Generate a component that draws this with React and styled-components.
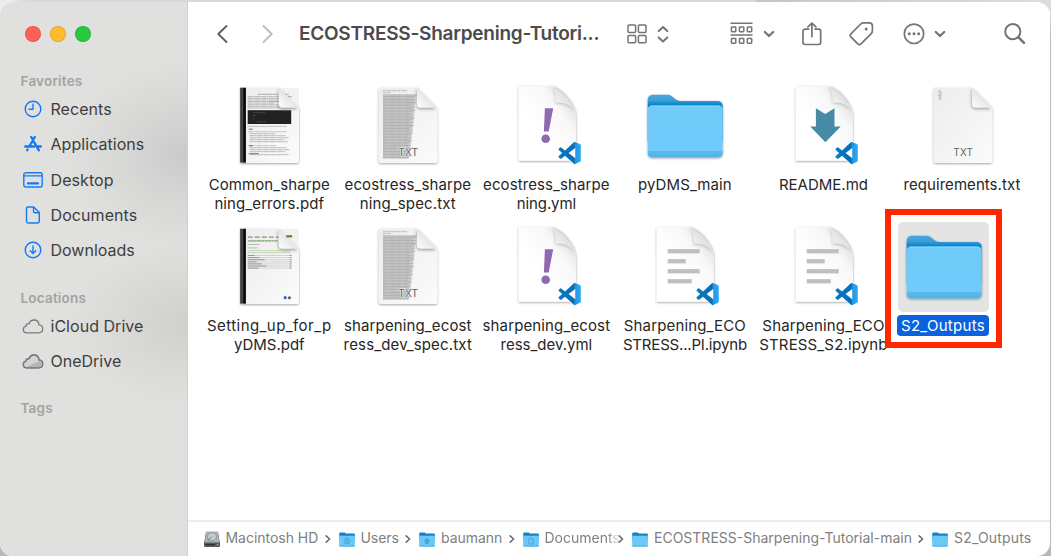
import React from "react";
import styled, { createGlobalStyle } from "styled-components";

const GlobalStyle = createGlobalStyle`
  * { box-sizing: border-box; }
  body {
    margin: 0;
    background: #d6d6d6;
    font-family: Inter, "Liberation Sans", sans-serif;
    overflow: hidden;
  }
  svg { display: block; flex: none; }
`;

const Desktop = styled.div`
  width: 1051px;
  height: 556px;
  padding: 2px 1px 0 0;
  background: linear-gradient(180deg, transparent 0 12px, #b9b9b9 40px),
    linear-gradient(90deg, #ececec 0 10px, #d8d8d8 30px 756px, #c6c6c6 757px, #dcdcdc 1040px);
`;

const Window = styled.div`
  display: flex;
  width: 1050px;
  height: 554px;
  border-radius: 13px;
  overflow: hidden;
  background: #fff;
`;

const Sidebar = styled.aside`
  width: 188px;
  flex: none;
  padding: 24px 0 0 20.5px;
  border-right: 1px solid #d0d0ce;
  background:
    radial-gradient(ellipse 125px 96px at 188px 152px, rgba(182, 183, 185, 0.55), rgba(196, 196, 196, 0.32) 50%, transparent),
    radial-gradient(ellipse 125px 84px at 188px 322px, rgba(192, 191, 184, 0.5), rgba(200, 199, 194, 0.3) 50%, transparent),
    #e0e0de;
`;

const Lights = styled.div`
  display: flex;
  gap: 9.3px;
  padding-left: 4px;
  height: 46px;
`;

const Light = styled.span`
  width: 16px;
  height: 16px;
  border-radius: 50%;
  background: ${(p) => p.$color};
  border: 1px solid rgba(0, 0, 0, 0.1);
`;

const Section = styled.section`
  height: ${(p) => p.$height}px;
`;

const SectionTitle = styled.h2`
  margin: 0;
  height: 20px;
  line-height: 18px;
  font-size: 13.5px;
  font-weight: 600;
  letter-spacing: 0.2px;
  color: #a3a3a1;
`;

const SideRow = styled.div`
  display: flex;
  align-items: center;
  height: 35.3px;
  margin-top: ${(p) => (p.$first ? "-0.6px" : "0")};
`;

const SideIcon = styled.span`
  width: 30px;
  display: flex;
  justify-content: center;
  padding-right: 6px;
`;

const SideLabel = styled.span`
  font-size: 16px;
  letter-spacing: ${(p) => p.$track || 0}px;
  color: #3e3e3d;
`;

const Main = styled.main`
  flex: 1;
  min-width: 0;
  display: flex;
  flex-direction: column;
`;

const Toolbar = styled.header`
  display: flex;
  align-items: center;
  height: 63px;
  padding-left: 27.6px;
  flex: none;
`;

const ToolSlot = styled.span`
  width: ${(p) => p.$width}px;
  display: flex;
  align-items: center;
  flex: none;
`;

const Title = styled.h1`
  margin: 0;
  width: 328.5px;
  font-size: 19px;
  font-weight: 600;
  letter-spacing: -0.24px;
  color: #4b4b4b;
  white-space: nowrap;
`;

const Files = styled.div`
  flex: 1;
  display: grid;
  grid-template-columns: repeat(6, 138.55px);
  grid-auto-rows: 141.3px;
  padding: 16px 0 0 12px;
`;

const File = styled.div`
  display: flex;
  flex-direction: column;
  align-items: center;
  ${(p) => p.$selected && "position: relative; margin: 0 19px 0 -19px;"}
`;

const Art = styled.div`
  width: 91px;
  height: 90px;
  border-radius: 5px;
  background: ${(p) => (p.$selected ? "#e4e4e4" : "transparent")};
`;

const Name = styled.div`
  margin-top: 2.6px;
  padding: 1px 4px;
  border-radius: 4px;
  text-align: center;
  white-space: nowrap;
  font-size: 15px;
  line-height: 19.6px;
  color: ${(p) => (p.$selected ? "#fff" : "#262626")};
  background: ${(p) => (p.$selected ? "#0a62de" : "transparent")};
`;

const Line = styled.div`
  letter-spacing: ${(p) => p.$track || 0}px;
`;

const Highlight = styled.div`
  position: absolute;
  left: 11px;
  top: -13.5px;
  width: 117.6px;
  height: 138.8px;
  border: 6.5px solid #ff2600;
`;

const PathBar = styled.footer`
  display: flex;
  align-items: center;
  height: 36px;
  padding-left: 15.5px;
  border-top: 2px solid #ececec;
`;

const Crumb = styled.div`
  display: flex;
  align-items: center;
  gap: 6px;
  width: ${(p) => p.$width}px;
  flex: none;
`;

const CrumbName = styled.span`
  flex: 1;
  min-width: 0;
  overflow: hidden;
  white-space: nowrap;
  font-size: 14px;
  line-height: 20px;
  margin-top: -1.6px;
  color: #808080;
  letter-spacing: ${(p) => p.$track || 0}px;
  ${(p) => p.$fade && "margin-right: -6px; mask-image: linear-gradient(90deg, #000 78%, transparent 97%);"}
`;

const CrumbEnd = styled.span`
  width: 14px;
  margin-left: -6px;
  display: flex;
`;

const BLUE = "#1479f5";
const TOOL = "#747474";

function SideGlyph({ kind }) {
  const line = { fill: "none", stroke: BLUE, strokeWidth: 1.4, strokeLinecap: "round", strokeLinejoin: "round" };
  const gray = { fill: "none", stroke: "#7b7b7a", strokeWidth: 1.3, strokeLinejoin: "round" };
  const cloud = "M5 14.8C2.7 14.8 1.3 13.2 1.3 11.4C1.3 9.5 2.6 8.3 4.1 8.1C3.9 6.4 5.4 5.3 7 5.8C7.8 3.3 9.8 2 12 2C14.9 2 16.8 4.2 17 6.9C19.2 7.1 20.7 8.8 20.7 10.8C20.7 13.2 19 14.8 16.7 14.8Z";
  switch (kind) {
    case "recents":
      return <svg width="18" height="18"><circle cx="9" cy="9" r="7.8" {...line} /><path d="M9 4V9.2H5" {...line} /></svg>;
    case "apps":
      return (
        <svg width="18" height="18">
          <g {...line} strokeWidth="2.3">
            <path d="M7.2 2L14.9 15.3M10.8 2L5.3 11.5M1.2 11.5H10.2M13.7 11.5H16.8M3.2 15.2L3.6 14.5" />
          </g>
        </svg>
      );
    case "desktop":
      return (
        <svg width="20" height="16">
          <rect x=".8" y=".8" width="18.4" height="14.2" rx="2" {...line} />
          <path d="M1 3.8H19" stroke={BLUE} strokeWidth="1.2" />
          <rect x="4" y="10.2" width="12" height="2.4" rx=".8" fill={BLUE} />
        </svg>
      );
    case "documents":
      return <svg width="16" height="18"><path d="M3 1H8.7L14.3 6.6V15C14.3 16.3 13.6 17 12.3 17H3.5C2.2 17 1.5 16.3 1.5 15V2.8C1.5 1.7 2 1 3 1ZM8.5 1.3V5.3C8.5 6.3 9 6.8 10 6.8H14" {...line} /></svg>;
    case "downloads":
      return <svg width="18" height="18"><circle cx="9" cy="9" r="7.8" {...line} /><path d="M9 5V12.3M6.2 9.8L9 12.6L11.8 9.8" {...line} /></svg>;
    case "icloud":
      return <svg width="22" height="16"><path d={cloud} {...gray} /></svg>;
    default:
      return (
        <svg width="22" height="16">
          <path d={cloud} {...gray} fill="#d4d4d3" />
          <path d="M4 14.4L17 8L20 9.5V12.5L17 14.4Z" fill="#b5b5b4" />
          <path d={cloud} {...gray} />
        </svg>
      );
  }
}

function Chevron({ dir, color }) {
  return (
    <svg width="12" height="20" fill="none" stroke={color} strokeWidth="1.9" strokeLinecap="round" strokeLinejoin="round">
      <path d={dir === "left" ? "M10.5 2L2.3 10L10.5 18" : "M1.5 2L9.7 10L1.5 18"} />
    </svg>
  );
}

function ToolGlyph({ kind }) {
  const s = { fill: "none", stroke: TOOL, strokeWidth: 1.7, strokeLinecap: "round", strokeLinejoin: "round" };
  switch (kind) {
    case "grid":
      return (
        <svg width="20" height="20" {...s} strokeWidth="1.5">
          {[[1, 1], [11.4, 1], [1, 11.4], [11.4, 11.4]].map(([x, y]) => (
            <rect key={x + "-" + y} x={x} y={y} width="7.6" height="7.4" rx="1" />
          ))}
        </svg>
      );
    case "updown":
      return <svg width="12" height="18" {...s} strokeWidth="2"><path d="M1.7 6L6 2L10.3 6M1.7 12.4L6 16.4L10.3 12.4" /></svg>;
    case "group":
      return (
        <svg width="23" height="23" {...s} strokeWidth="1.5">
          <path d="M1 1.2H22M1 12.9H22" />
          {[1.4, 9.4, 17.3].map((x) => (
            <g key={x}>
              <rect x={x} y="5.1" width="4.4" height="4.6" rx=".6" />
              <rect x={x} y="16.6" width="4.4" height="4.6" rx=".6" />
            </g>
          ))}
        </svg>
      );
    case "down":
      return <svg width="12" height="8" {...s} strokeWidth="2.2"><path d="M1.8 2L6 6L10.2 2" /></svg>;
    case "share":
      return <svg width="20" height="24" {...s}><path d="M6.6 7.2H3.3C1.7 7.2 1 8 1 9.4V20.3C1 21.7 1.8 22.5 3.3 22.5H16.4C17.9 22.5 18.7 21.7 18.7 20.3V9.4C18.7 8 17.9 7.2 16.4 7.2H13.1M9.9 14.7V1.1M5.9 4.9L9.9 1L13.9 4.9" /></svg>;
    case "tag":
      return (
        <svg width="25" height="25" {...s}>
          <path d="M14.5 1.8H20.2C22.5 1.8 23.4 2.9 23.4 4.9V9.7C23.4 11.2 22.9 12 22 12.9L12 22.8C11 23.8 9.8 23.8 8.8 22.8L1.9 15.9C.9 14.9.9 13.8 1.9 12.8L11.8 3C12.6 2.2 13.3 1.8 14.5 1.8Z" />
          <circle cx="17.2" cy="8" r="1.5" fill={TOOL} stroke="none" />
        </svg>
      );
    case "more":
      return (
        <svg width="22" height="22" {...s}>
          <circle cx="11" cy="10.8" r="9.7" />
          <g fill={TOOL} stroke="none"><circle cx="6.3" cy="10.8" r="1.5" /><circle cx="11" cy="10.8" r="1.5" /><circle cx="15.7" cy="10.8" r="1.5" /></g>
        </svg>
      );
    default:
      return <svg width="22" height="22" {...s} strokeWidth="2"><circle cx="8.8" cy="8.6" r="7.6" /><path d="M14.6 14.4L20 19.9" strokeWidth="2.5" /></svg>;
  }
}

function Defs() {
  return (
    <svg width="0" height="0" style={{ position: "absolute" }}>
      <defs>
        <linearGradient id="paper" x1="0" y1="0" x2="1" y2="1"><stop offset="0" stopColor="#ececec" /><stop offset="1" stopColor="#fbfbfb" /></linearGradient>
        <linearGradient id="sheet" x1="1" y1="0" x2=".35" y2=".6"><stop offset=".1" stopColor="#dadada" /><stop offset=".5" stopColor="#f8f8f8" /><stop offset="1" stopColor="#fff" /></linearGradient>
        <linearGradient id="fold" x1="0" y1="1" x2=".7" y2=".3"><stop offset="0" stopColor="#fff" /><stop offset="1" stopColor="#dcdcdc" /></linearGradient>
        <linearGradient id="spine"><stop offset="0" stopColor="#111" /><stop offset=".35" stopColor="#555" /><stop offset=".6" stopColor="#111" /><stop offset="1" stopColor="#000" /></linearGradient>
        <linearGradient id="front" x1="0" y1="0" x2="0" y2="1"><stop offset="0" stopColor="#70cbf9" /><stop offset=".87" stopColor="#70cafb" /><stop offset=".87" stopColor="#5cbcec" /><stop offset="1" stopColor="#52b3e4" /></linearGradient>
        <linearGradient id="back" x1="0" y1="0" x2="0" y2="1"><stop offset="0" stopColor="#48a6dc" /><stop offset=".12" stopColor="#3a9fd8" /><stop offset=".2" stopColor="#0e86cb" /><stop offset="1" stopColor="#2c98d8" /></linearGradient>
        <linearGradient id="code"><stop offset="0" stopColor="#0879c4" /><stop offset=".7" stopColor="#0a6db4" /><stop offset=".75" stopColor="#1f96e6" /><stop offset="1" stopColor="#2eaaf5" /></linearGradient>
        <filter id="drop" x="-20%" y="-20%" width="140%" height="140%"><feDropShadow dx="0" dy=".8" stdDeviation=".9" floodOpacity=".4" /></filter>
        <filter id="soft" x="-50%" y="-50%" width="200%" height="200%"><feGaussianBlur stdDeviation="1.6" /></filter>
      </defs>
    </svg>
  );
}

function FolderArt() {
  return (
    <svg width="91" height="90" viewBox="-.7 -.8 91 90">
      <g filter="url(#drop)">
        <path d="M8 19C8 15 10 13 13.5 13H28C33 13 35 19.3 41 19.3H78C81.3 19.3 83 21.5 83 25V60H8Z" fill="url(#back)" />
        <path d="M8 28C8 25.3 9.6 23.7 12.3 23.7H78.7C81.4 23.7 83 25.3 83 28V71.2C83 74 81.2 75.7 78.4 75.7H12.6C9.8 75.7 8 74 8 71.2Z" fill="url(#front)" />
      </g>
      <path d="M11 24.3H80" stroke="#8edcfb" strokeWidth=".8" />
    </svg>
  );
}

function CodeBadge() {
  return (
    <g transform="translate(56.8 60.4) scale(.93)">
      <path stroke="#fff" strokeWidth="1.6" fill="url(#code)" paintOrder="stroke" fillRule="evenodd" d="M23.15 2.587L18.21.21a1.494 1.494 0 0 0-1.705.29l-9.46 8.63-4.12-3.128a.999.999 0 0 0-1.276.057L.327 7.261A1 1 0 0 0 .326 8.74L3.899 12 .326 15.26a1 1 0 0 0 .001 1.479L1.65 17.94a.999.999 0 0 0 1.276.057l4.12-3.128 9.46 8.63a1.492 1.492 0 0 0 1.704.29l4.942-2.377A1.5 1.5 0 0 0 24 20.06V3.939a1.5 1.5 0 0 0-.85-1.352zm-5.146 14.861L10.826 12l7.178-5.448v10.896z" />
    </g>
  );
}

function CodeArt({ mark }) {
  return (
    <svg width="91" height="90" viewBox="-.7 -.5 91 90">
      <path d="M17 5H50C60 5 74.3 23 74.3 34V79.3H17Z" fill="url(#sheet)" filter="url(#drop)" />
      <path d="M53.7 22.3C61 21 70 25 73.5 31C70 20 59 8 50 5.5C53.5 9 54.5 15 53.7 22.3Z" fill="#999" filter="url(#soft)" opacity=".6" />
      <path d="M53.7 21.3C60 20 69 23 73.5 30C69 19 60 9 50 5.2C53.5 9 54.3 15 53.7 21.3Z" fill="url(#fold)" />
      {mark === "bang" && <g fill="#9068b0"><path d="M43.2 26.7H51.5L47 50H42.2Z" /><circle cx="44" cy="57.3" r="4.3" /></g>}
      {mark === "arrow" && <path d="M37.2 26.7L46.5 32.6L55.8 26.7V45H62L46.7 60.7L31.5 45H37.2Z" fill="#488aa6" />}
      {mark === "lines" && <g fill="#bcc0be"><rect x="28" y="26.6" width="32" height="4.3" /><rect x="28" y="36.6" width="18" height="4.3" /><rect x="28" y="46.6" width="32" height="4.3" /><rect x="28" y="56.6" width="24" height="4.3" /></g>}
      <CodeBadge />
    </svg>
  );
}

function Corner() {
  return (
    <>
      <path d="M53.5 7V23C53.5 26 55.5 27.5 58.5 27.5H73Z" fill="#777" filter="url(#soft)" opacity=".65" />
      <path d="M54 6V22.3C54 24.7 55.3 26 57.7 26H74.2Z" fill="url(#fold)" />
    </>
  );
}

function TextArt({ full }) {
  return (
    <svg width="91" height="90" viewBox="-1 -.7 91 90">
      <path d="M18 6H54L74.3 26V79C74.3 80.5 73.6 81.2 72 81.2H18C16.4 81.2 15.6 80.5 15.6 79V8.4C15.6 6.8 16.4 6 18 6Z" fill="url(#paper)" filter="url(#drop)" />
      {full && (
        <g stroke="#a8a8a8" strokeWidth=".8">
          <path d="M20 9H44M20 11H28" strokeDasharray="2 .5" />
          <path d="M20 13H53L50 45L46 77H20Z" fill="#cfcfcf" stroke="none" />
          {Array.from({ length: 42 }, (_, i) => (
            <path key={i} d={`M20 ${13.2 + i * 1.53}H${54 - i * 0.17 - ((i * 7) % 5)}`} strokeDasharray="4.4 .3 2.2 .3 6.1 .3" />
          ))}
        </g>
      )}
      {!full && <path d="M20 9.5H23M21 11.5H24M20 13.5H23.5M20.5 15.5H24M21 17.5H23" stroke="#aaa" strokeWidth="1" />}
      <Corner />
      <text x="45.3" y="74" textAnchor="middle" fontFamily="Inter, sans-serif" fontSize="10" letterSpacing=".2" fill="#666" stroke={full ? "#eee" : "none"} strokeWidth="1.2" paintOrder="stroke">TXT</text>
    </svg>
  );
}

function PdfArt({ variant }) {
  const dense = [14, 15.6, 17.2, 18.8, 20.4, 22, 23.6, 25.2, 49, 51, 53, 55, 57, 59, 63, 65, 67, 69, 72];
  return (
    <svg width="91" height="90" viewBox="-.7 -.7 91 90">
      <path d="M15.6 6H54L74.3 26V79C74.3 80.5 73.6 81.2 72 81.2H15.6Z" fill="url(#paper)" filter="url(#drop)" />
      <path d="M53 6H72C73.6 6 74.3 6.8 74.3 8.4V27H53Z" fill="#f2f2f2" />
      <rect x="15.6" y="6" width="5.6" height="75" fill="url(#spine)" />
      {variant === "errors" ? (
        <g strokeWidth=".8">
          <path d="M33 12.6H64M64 15H67" stroke="#888" strokeDasharray="2 .5" />
          {dense.map((y, i) => (
            <path key={y} d={`M${i > 8 ? 25 : 23} ${y + 1}H${66 - ((i * 11) % 7) - (i % 5 === 4 ? 14 : 0)}`} stroke={y === 49 || y === 63 ? "#efa877" : "#a8a8a8"} strokeDasharray="4.3 .3 2.1 .3" />
          ))}
          <path d="M44 20H54" stroke="#81aee0" />
          <rect x="23" y="28.5" width="43.5" height="13.8" fill="#222" />
          <path d="M28 31H41M28 34H31M28 37H30M32 40H41" stroke="#4a4a4a" />
          <path d="M23 44.7H62" stroke="#aaa" strokeDasharray="2 .5" />
          <path d="M24 47.5H28M24 64H28M24 72H34" stroke="#555" />
        </g>
      ) : (
        <g strokeWidth=".8">
          <path d="M23 14.5H54" stroke="#7c9a68" strokeWidth="1.2" strokeDasharray="5 2" />
          <path d="M23 18.2H53" stroke="#76a45f" strokeWidth="1.4" strokeDasharray="3 .4" />
          <path d="M23 21.8H35M23 25.2H33" stroke="#aaa" />
          <path d="M23 28H65M23 30H66" stroke="#b9cda7" />
          {[32.8, 34.9, 37, 39.1, 41.2, 43.3, 45.4].map((y, i) => (
            <g key={y}><path d={`M${23 + (i > 4 ? 1 : 0)} ${y}H66.5`} stroke="#c8c8c8" /><path d={`M23 ${y}H${30 + ((i * 5) % 13)}M65 ${y}H67`} stroke="#888" /></g>
          ))}
          <circle cx="60.5" cy="75" r="1.6" fill="#3d62bd" /><circle cx="64.7" cy="75" r="1.5" fill="#456b3d" />
        </g>
      )}
      <Corner />
      {variant !== "errors" && <rect x="61.5" y="12.5" width="6" height="2.2" fill="#4c8a2d" />}
    </svg>
  );
}

function MiniFolder({ mark }) {
  return (
    <svg width="16" height="15">
      <path d="M.2 2C.2 1 .7.5 1.6.5H5.7L7 1.6H14.6C15.5 1.6 15.9 2 15.9 3V8H.2Z" fill="#1483c5" />
      <path d="M.2 3.8H15.9V13.3C15.9 14.1 15.5 14.5 14.7 14.5H1.4C.6 14.5.2 14.1.2 13.3Z" fill="#6bc9fa" />
      <path d="M.5 14.1H15.6" stroke="#50a9d7" strokeWidth=".9" />
      <g fill="none" stroke="#4aa5d8" strokeWidth=".9">
        {mark === "user" && <><circle cx="8" cy="8.9" r="3" /><circle cx="8" cy="8.2" r=".9" fill="#4aa5d8" /><path d="M6 10.7C7 9.7 9 9.7 10 10.7" /></>}
        {mark === "home" && <path d="M5 9L8 6.4L11 9M6.3 9V11.5H9.7V9" fill="#4aa5d8" />}
        {mark === "doc" && <path d="M5.8 6H8.8L10.4 7.6V12H5.8ZM8.6 6V8H10.3" />}
      </g>
    </svg>
  );
}

function Disk() {
  return (
    <svg width="16" height="16">
      <path d="M2 1H14L16 12V14.4C16 15.5 15.3 16 14.4 16H1.6C.7 16 0 15.5 0 14.4V12Z" fill="#555b5d" />
      <path d="M2.3.4H13.7L15.5 11.5H.5Z" fill="#a8b3b7" />
      <ellipse cx="8" cy="5.7" rx="4.4" ry="4" fill="#c5cdd0" stroke="#879297" strokeWidth=".8" />
      <path d="M7.7 5.6L4 9.8" stroke="#737d82" strokeWidth="1" />
      <path d="M1.5 13.6H11" stroke="#2e3234" strokeWidth="1.2" />
      <circle cx="13.5" cy="13.6" r=".7" fill="#c6d6cf" />
    </svg>
  );
}

const favorites = [
  ["recents", "Recents", 0.05],
  ["apps", "Applications", 0.05],
  ["desktop", "Desktop", 0.08],
  ["documents", "Documents", 0.08],
  ["downloads", "Downloads", 0],
];
const locations = [
  ["icloud", "iCloud Drive", 0.03],
  ["onedrive", "OneDrive", 0],
];

const files = [
  { art: <PdfArt variant="errors" />, lines: [["Common_sharpe", 0.1], ["ning_errors.pdf", 0.1]] },
  { art: <TextArt full />, lines: [["ecostress_sharpe", 0.1], ["ning_spec.txt", 0.12]] },
  { art: <CodeArt mark="bang" />, lines: [["ecostress_sharpe", 0.1], ["ning.yml", -0.1]] },
  { art: <FolderArt />, lines: [["pyDMS_main", 0.1]] },
  { art: <CodeArt mark="arrow" />, lines: [["README.md", 0]] },
  { art: <TextArt />, lines: [["requirements.txt", 0.05]] },
  { art: <PdfArt variant="setup" />, lines: [["Setting_up_for_p", 0.44], ["yDMS.pdf", 0]] },
  { art: <TextArt full />, lines: [["sharpening_ecost", 0.13], ["ress_dev_spec.txt", 0.17]] },
  { art: <CodeArt mark="bang" />, lines: [["sharpening_ecost", 0.13], ["ress_dev.yml", 0]] },
  { art: <CodeArt mark="lines" />, lines: [["Sharpening_ECO", 0.15], ["STRESS...PI.ipynb", -0.18]] },
  { art: <CodeArt mark="lines" />, lines: [["Sharpening_ECO", 0.15], ["STRESS_S2.ipynb", 0.15]] },
  { art: <FolderArt />, lines: [["S2_Outputs", 0.3]], selected: true },
];

const crumbs = [
  { icon: <Disk />, name: "Macintosh HD", width: 135, track: -0.03 },
  { icon: <MiniFolder mark="user" />, name: "Users", width: 80.5, track: -0.05 },
  { icon: <MiniFolder mark="home" />, name: "baumann", width: 103.5, track: -0.05 },
  { icon: <MiniFolder mark="doc" />, name: "Documents", width: 109.5, fade: true },
  { icon: <MiniFolder />, name: "ECOSTRESS-Sharpening-Tutorial-main", width: 300 },
  { icon: <MiniFolder />, name: "S2_Outputs", width: 110, track: 0.18, last: true },
];

function SideRows({ rows }) {
  return rows.map(([kind, label, track], i) => (
    <SideRow key={label} $first={i === 0}>
      <SideIcon><SideGlyph kind={kind} /></SideIcon>
      <SideLabel $track={track}>{label}</SideLabel>
    </SideRow>
  ));
}

export default function App() {
  return (
    <Desktop>
      <GlobalStyle />
      <Defs />
      <Window>
        <Sidebar>
          <Lights>
            <Light $color="#ff5f57" />
            <Light $color="#febc2e" />
            <Light $color="#28c840" />
          </Lights>
          <Section $height={216.8}>
            <SectionTitle>Favorites</SectionTitle>
            <SideRows rows={favorites} />
          </Section>
          <Section $height={110.7}>
            <SectionTitle>Locations</SectionTitle>
            <SideRows rows={locations} />
          </Section>
          <SectionTitle>Tags</SectionTitle>
        </Sidebar>
        <Main>
          <Toolbar>
            <ToolSlot $width={46.4}><Chevron dir="left" color="#5f5f5f" /></ToolSlot>
            <ToolSlot $width={37}><Chevron dir="right" color="#bdbdbd" /></ToolSlot>
            <Title>ECOSTRESS-Sharpening-Tutori...</Title>
            <ToolSlot $width={29.5}><ToolGlyph kind="grid" /></ToolSlot>
            <ToolSlot $width={73.5}><ToolGlyph kind="updown" /></ToolSlot>
            <ToolSlot $width={32.5}><ToolGlyph kind="group" /></ToolSlot>
            <ToolSlot $width={39}><ToolGlyph kind="down" /></ToolSlot>
            <ToolSlot $width={47}><ToolGlyph kind="share" /></ToolSlot>
            <ToolSlot $width={54.3}><ToolGlyph kind="tag" /></ToolSlot>
            <ToolSlot $width={30.5}><ToolGlyph kind="more" /></ToolSlot>
            <ToolSlot $width={70}><ToolGlyph kind="down" /></ToolSlot>
            <ToolSlot $width={24}><ToolGlyph kind="search" /></ToolSlot>
          </Toolbar>
          <Files>
            {files.map((f, i) => (
              <File key={i} $selected={f.selected}>
                <Art $selected={f.selected}>{f.art}</Art>
                <Name $selected={f.selected}>
                  {f.lines.map(([text, track]) => <Line key={text} $track={track}>{text}</Line>)}
                </Name>
                {f.selected && <Highlight />}
              </File>
            ))}
          </Files>
          <PathBar>
            {crumbs.map((c) => (
              <Crumb key={c.name} $width={c.width}>
                {c.icon}
                <CrumbName $fade={c.fade} $track={c.track}>{c.name}</CrumbName>
                {!c.last && (
                  <CrumbEnd>
                    <svg width="6" height="10" fill="none" stroke="#6d6d6d" strokeWidth="1.6" strokeLinecap="round" strokeLinejoin="round"><path d="M1.2 1.8L4.6 5L1.2 8.2" /></svg>
                  </CrumbEnd>
                )}
              </Crumb>
            ))}
          </PathBar>
        </Main>
      </Window>
    </Desktop>
  );
}
